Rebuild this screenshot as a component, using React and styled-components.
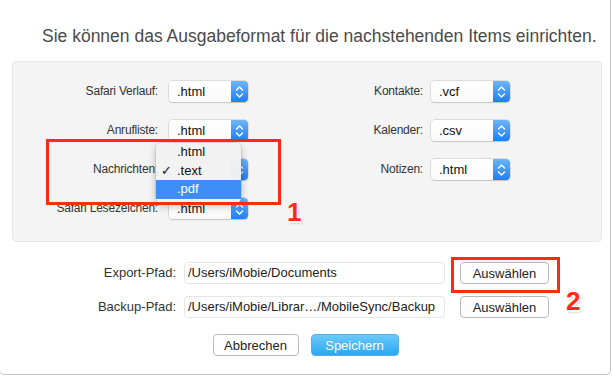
import React from 'react';
import styled, { createGlobalStyle } from 'styled-components';

const Global = createGlobalStyle`
  html, body { margin: 0; padding: 0; background: #fff; }
  body { font-family: "Liberation Sans", Arial, sans-serif; color: #333; }
`;

const Window = styled.div`
  position: relative;
  margin-left: -1px;
  width: 612px;
  height: 375px;
  box-sizing: border-box;
  border: 1px solid #c4c4c4;
  border-top: none;
  border-radius: 0 0 5px 5px;
  background: #fff;
  overflow: hidden;
`;

const Title = styled.h1`
  margin: 0;
  padding: 26px 0 0 42px;
  height: 20px;
  line-height: 20px;
  font-size: 17.5px;
  font-weight: 400;
  color: #4a4a4a;
  white-space: nowrap;
`;

const Panel = styled.div`
  margin: 15px 0 0 12px;
  width: 590px;
  box-sizing: border-box;
  height: 181px;
  padding-top: 19px;
  background: #f4f4f4;
  border: 1px solid #e8e8e8;
  border-radius: 4px;
  display: grid;
  grid-template-columns: 156px 79px 183px 79px;
  grid-auto-rows: 21px;
  row-gap: 18px;
  align-content: start;
`;

const Label = styled.div`
  font-size: 12px;
  letter-spacing: -0.2px;
  line-height: 21px;
  text-align: right;
  padding-right: ${p => p.$pad}px;
  color: #333;
  white-space: nowrap;
`;

const SelectBox = styled.div`
  position: relative;
  display: flex;
  height: 21px;
  box-sizing: border-box;
  border-radius: 4px;
  background: linear-gradient(#ffffff, #fafafa);
  box-shadow: 0 0 0 0.5px #c2c2c2, 0 1px 1px rgba(0,0,0,0.18);
`;

const SelectValue = styled.div`
  flex: 1;
  font-size: 13px;
  line-height: 21px;
  padding-left: 8px;
  color: #111;
`;

const SelectArrow = styled.div`
  width: 17px;
  border-radius: 0 4px 4px 0;
  background: linear-gradient(#6db4fb, #1d7ff6);
  display: flex;
  align-items: center;
  justify-content: center;
`;

const Menu = styled.div`
  position: absolute;
  left: -13px;
  top: -16px;
  width: 85px;
  padding: 0 0 4px;
  box-sizing: border-box;
  background: rgba(242,242,242,0.97);
  border-radius: 5px;
  box-shadow: 0 0 0 0.5px rgba(0,0,0,0.15), 0 3px 8px rgba(0,0,0,0.25);
  z-index: 2;
`;

const MenuItem = styled.div`
  position: relative;
  height: 18.5px;
  line-height: 18.5px;
  font-size: 13px;
  padding-left: 21px;
  color: ${p => (p.$active ? '#fff' : '#111')};
  background: ${p => (p.$active ? '#3d8df5' : 'transparent')};
`;

const Check = styled.span`
  position: absolute;
  left: 5px;
  top: 0;
  font-size: 13px;
  font-family: "DejaVu Sans", sans-serif;
`;

const PathGrid = styled.div`
  margin-top: 20px;
  display: grid;
  grid-template-columns: 184px 261px 104px;
  grid-auto-rows: 22px;
  row-gap: 12px;
`;

const PathLabel = styled.div`
  font-size: 13px;
  line-height: 22px;
  text-align: right;
  padding-right: 8px;
  color: #333;
`;

const PathInput = styled.div`
  background: #fff;
  border: 1px solid #e6e6e6;
  border-radius: 4px;
  font-size: 13px;
  line-height: 20px;
  padding-left: 3px;
  color: #222;
  white-space: nowrap;
  overflow: hidden;
`;

const Button = styled.button`
  justify-self: end;
  height: 22px;
  width: ${p => p.$w}px;
  padding: 0;
  font-family: "Liberation Sans", Arial, sans-serif;
  font-size: 13px;
  border-radius: 4px;
  color: ${p => (p.$primary ? '#fff' : '#222')};
  border: 1px solid ${p => (p.$primary ? '#4fb1f0' : '#b9b9b9')};
  background: ${p => (p.$primary ? 'linear-gradient(#6ccaf9, #2aa6f3)' : '#fff')};
`;

const Actions = styled.div`
  margin-top: 16px;
  display: flex;
  justify-content: center;
  gap: 12px;
  padding-left: 1px;
`;

const RedBox = styled.div`
  position: absolute;
  left: ${p => p.$x}px;
  top: ${p => p.$y}px;
  width: ${p => p.$w}px;
  height: ${p => p.$h}px;
  box-sizing: border-box;
  border: 3px solid #ff2a12;
  z-index: 3;
  pointer-events: none;
`;

const Num = styled.div`
  position: absolute;
  left: ${p => p.$x}px;
  top: ${p => p.$y}px;
  font-size: 26px;
  font-weight: 700;
  line-height: 27px;
  color: #ff2a12;
  font-family: "Liberation Sans", Arial, sans-serif;
  text-shadow: -1px -1px 0 #fff, 1px -1px 0 #fff, -1px 1px 0 #fff, 1px 1px 0 #fff, 0 2px 0 #fff, 1px 2px 3px rgba(0,0,0,0.3);
  z-index: 3;
`;

const Arrows = () => (
  <svg width="9" height="14" viewBox="0 0 9 14">
    <path d="M1.5 5 L4.5 2 L7.5 5" fill="none" stroke="#fff" strokeWidth="1.4" strokeLinecap="round" strokeLinejoin="round" />
    <path d="M1.5 9 L4.5 12 L7.5 9" fill="none" stroke="#fff" strokeWidth="1.4" strokeLinecap="round" strokeLinejoin="round" />
  </svg>
);

const Select = ({ value, children }) => (
  <SelectBox>
    <SelectValue>{value}</SelectValue>
    <SelectArrow><Arrows /></SelectArrow>
    {children}
  </SelectBox>
);

const left = [
  ['Safari Verlauf:', '.html'],
  ['Anrufliste:', '.html'],
  ['Nachrichten:', '.text'],
  ['Safari Lesezeichen:', '.html'],
];
const right = [
  ['Kontakte:', '.vcf'],
  ['Kalender:', '.csv'],
  ['Notizen:', '.html'],
  null,
];

export default function App() {
  return (
    <>
      <Global />
      <Window>
        <Title>Sie können das Ausgabeformat für die nachstehenden Items einrichten.</Title>
        <Panel>
          {left.map((l, i) => (
            <React.Fragment key={i}>
              <Label $pad={11}>{l[0]}</Label>
              <Select value={l[1]}>
                {i === 2 && (
                  <Menu>
                    <MenuItem>.html</MenuItem>
                    <MenuItem><Check>✓</Check>.text</MenuItem>
                    <MenuItem $active>.pdf</MenuItem>
                  </Menu>
                )}
              </Select>
              {right[i] ? (
                <>
                  <Label $pad={8}>{right[i][0]}</Label>
                  <Select value={right[i][1]} />
                </>
              ) : (
                <>
                  <div />
                  <div />
                </>
              )}
            </React.Fragment>
          ))}
        </Panel>
        <PathGrid>
          <PathLabel>Export-Pfad:</PathLabel>
          <PathInput>/Users/iMobie/Documents</PathInput>
          <Button $w={89}>Auswählen</Button>
          <PathLabel>Backup-Pfad:</PathLabel>
          <PathInput>/Users/iMobie/Librar…/MobileSync/Backup</PathInput>
          <Button $w={89}>Auswählen</Button>
        </PathGrid>
        <Actions>
          <Button $w={86}>Abbrechen</Button>
          <Button $w={88} $primary>Speichern</Button>
        </Actions>
        <RedBox $x={46} $y={139} $w={235} $h={66} />
        <Num $x={287} $y={199}>1</Num>
        <RedBox $x={451} $y={257} $w={109} $h={36} />
        <Num $x={566} $y={288}>2</Num>
      </Window>
    </>
  );
}
